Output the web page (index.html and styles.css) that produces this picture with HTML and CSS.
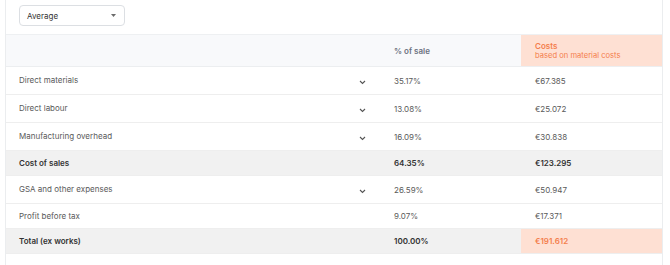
FILE: index.html
```html
<!DOCTYPE html>
<html lang="en">
<head>
<meta charset="utf-8">
<title>Cost breakdown</title>
<link rel="stylesheet" href="styles.css">
</head>
<body>
<div class="card">
  <div class="toolbar">
    <div class="select">
      <span>Average</span>
      <svg class="select-caret" width="5" height="3" viewBox="0 0 5 3"><path d="M0 0H5L2.5 3Z" fill="#6b6b6b"/></svg>
    </div>
  </div>
  <div class="table">
    <div class="row head">
      <div class="cell label"></div>
      <div class="cell toggle"></div>
      <div class="cell pct">% of sale</div>
      <div class="cell cost accent"><span class="title">Costs</span><span class="sub">based on material costs</span></div>
    </div>
    <div class="row tall">
      <div class="cell label">Direct materials</div>
      <div class="cell toggle"><svg class="chev" width="7" height="5" viewBox="0 0 7 5"><path d="M1 1L3.5 3.5L6 1" fill="none" stroke="#555" stroke-width="1.1"/></svg></div>
      <div class="cell pct">35.17%</div>
      <div class="cell cost">€67.385</div>
    </div>
    <div class="row tall">
      <div class="cell label">Direct labour</div>
      <div class="cell toggle"><svg class="chev" width="7" height="5" viewBox="0 0 7 5"><path d="M1 1L3.5 3.5L6 1" fill="none" stroke="#555" stroke-width="1.1"/></svg></div>
      <div class="cell pct">13.08%</div>
      <div class="cell cost">€25.072</div>
    </div>
    <div class="row tall">
      <div class="cell label">Manufacturing overhead</div>
      <div class="cell toggle"><svg class="chev" width="7" height="5" viewBox="0 0 7 5"><path d="M1 1L3.5 3.5L6 1" fill="none" stroke="#555" stroke-width="1.1"/></svg></div>
      <div class="cell pct">16.09%</div>
      <div class="cell cost">€30.838</div>
    </div>
    <div class="row sum">
      <div class="cell label">Cost of sales</div>
      <div class="cell toggle"></div>
      <div class="cell pct">64.35%</div>
      <div class="cell cost">€123.295</div>
    </div>
    <div class="row tall">
      <div class="cell label">GSA and other expenses</div>
      <div class="cell toggle"><svg class="chev" width="7" height="5" viewBox="0 0 7 5"><path d="M1 1L3.5 3.5L6 1" fill="none" stroke="#555" stroke-width="1.1"/></svg></div>
      <div class="cell pct">26.59%</div>
      <div class="cell cost">€50.947</div>
    </div>
    <div class="row">
      <div class="cell label">Profit before tax</div>
      <div class="cell toggle"></div>
      <div class="cell pct">9.07%</div>
      <div class="cell cost">€17.371</div>
    </div>
    <div class="row sum">
      <div class="cell label">Total (ex works)</div>
      <div class="cell toggle"></div>
      <div class="cell pct">100.00%</div>
      <div class="cell cost accent">€191.612</div>
    </div>
  </div>
</div>
</body>
</html>
```

FILE: styles.css
```css
* { box-sizing: border-box; }
html, body { margin: 0; padding: 0; background: #ffffff; }
body {
  font-family: Inter, "Noto Sans", sans-serif;
  font-size: 8px;
  color: #5a5a5a;
}
.card {
  margin-left: 5px;
  width: 658px;
  height: 265px;
  border-left: 1px solid #ebedef;
  border-right: 1px solid #ebedef;
  padding-top: 5px;
}
.toolbar {
  padding: 0 13px;
  height: 29px;
}
.select {
  width: 106px;
  height: 21px;
  border: 1px solid #dcdfe3;
  border-radius: 4px;
  display: flex;
  align-items: center;
  justify-content: space-between;
  padding: 0 8px 0 7px;
  color: #333333;
  font-size: 8px;
}
.select-caret { display: block; }
.table {
  border-top: 1px solid #eef0f2;
}
.row {
  display: grid;
  grid-template-columns: 344px 30px 141px 141px;
  border-bottom: 1px solid #eeeeee;
  min-height: 25px;
}
.cell {
  display: flex;
  align-items: center;
  line-height: 12px;
}
.label { padding-left: 13px; }
.toggle { padding-left: 9px; }
.pct, .cost { padding-left: 14px; }
.chev { display: block; margin-top: 3px; }
.row.tall { min-height: 28px; }
.row.tall .label { padding-bottom: 2px; }
.row.head {
  background: #f8f9fb;
  min-height: 32px;
  border-bottom: 1px solid #eceef0;
}
.row.head .pct {
  font-weight: 600;
  color: #6b7280;
}
.accent {
  background: #fee0d3;
  color: #f47e4c;
}
.row.head .cost {
  flex-direction: column;
  align-items: flex-start;
  justify-content: center;
  line-height: 9px;
}
.row.head .title { font-weight: 600; }
.row.head .sub { font-size: 7.6px; }
.row.sum {
  background: #f1f1f1;
  font-weight: 600;
  color: #333333;
}
.row.sum .cost.accent { color: #f47e4c; }
```
